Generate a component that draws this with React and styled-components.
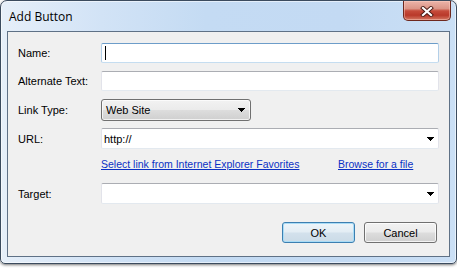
import React from 'react';
import styled, { createGlobalStyle } from 'styled-components';

const Global = createGlobalStyle`
  html, body { margin: 0; padding: 0; background: #ffffff; }
  body { width: 457px; height: 268px; overflow: hidden; font-family: "Liberation Sans", Arial, sans-serif; }
  * { box-sizing: border-box; }
`;

const Window = styled.div`
  width: 457px;
  height: 264px;
  border: 1px solid #3b4b5e;
  border-radius: 7px 7px 5px 5px;
  background: linear-gradient(90deg, #e6eff9 0%, #d2e3f6 22%, #c4dbf3 45%, #c3daf3 75%, #cadff5 100%);
  box-shadow: inset 0 0 0 1px rgba(255, 255, 255, 0.55), 0 1px 3px rgba(0, 0, 0, 0.55);
  display: flex;
  flex-direction: column;
  padding: 0 6px 6px;
`;

const TitleBar = styled.div`
  height: 30px;
  display: flex;
  align-items: flex-start;
  justify-content: space-between;
`;

const Title = styled.div`
  font-family: "Open Sans", "Noto Sans", sans-serif;
  font-size: 12px;
  line-height: 30px;
  color: #000;
  padding-left: 2px;
  padding-top: 1px;
`;

const CloseButton = styled.div`
  width: 48px;
  height: 20px;
  margin-right: -1px;
  border: 1px solid #6e281e;
  border-top: none;
  border-radius: 0 0 5px 5px;
  background: linear-gradient(180deg, #ecb4a9 0%, #dc9587 40%, #c64b3b 52%, #b9392a 75%, #d47964 100%);
  box-shadow: inset 0 0 0 1px rgba(255, 210, 200, 0.45);
  display: flex;
  align-items: center;
  justify-content: center;
  padding-top: 2px;
`;

const Client = styled.div`
  flex: 1;
  border: 1px solid #5f7186;
  background: #f0f0f0;
  padding: 11px 10px 0 10px;
  display: flex;
  flex-direction: column;
`;

const Row = styled.div`
  display: grid;
  grid-template-columns: 83px 1fr;
  align-items: center;
  height: ${p => p.$h}px;
  margin-top: ${p => p.$mt || 0}px;
`;

const Label = styled.div`
  font-size: 11px;
  color: #000;
`;

const TextBox = styled.div`
  height: 100%;
  background: #fff;
  border: 1px solid;
  border-color: ${p => (p.$focused ? '#6d9dc9 #b3cfe8 #c5ddf0 #b3cfe8' : '#abadb3 #e2e3ea #e3e9ef #e2e3ea')};
  border-radius: 2px;
  display: flex;
  align-items: center;
  padding-left: 3px;
  font-size: 11px;
`;

const Caret = styled.span`
  display: block;
  width: 1px;
  height: 14px;
  background: #000;
`;

const Combo = styled(TextBox)`
  justify-content: space-between;
  padding-right: 4px;
  padding-left: 2px;
`;

const SelectBtn = styled.div`
  width: 150px;
  height: 100%;
  border: 1px solid #707070;
  border-radius: 3px;
  background: linear-gradient(180deg, #f2f2f2 0%, #ebebeb 48%, #dddddd 52%, #cfcfcf 100%);
  box-shadow: inset 0 0 0 1px rgba(255, 255, 255, 0.7);
  display: flex;
  align-items: center;
  justify-content: space-between;
  padding: 0 5px 0 4px;
  font-size: 11px;
  color: #000;
`;

const Links = styled.div`
  display: grid;
  grid-template-columns: 237px auto;
  justify-content: start;
  font-size: 10.5px;
  line-height: 14px;
`;

const Link = styled.a`
  color: #0b31c4;
  text-decoration: underline;
  cursor: pointer;
  white-space: nowrap;
`;

const ButtonRow = styled.div`
  display: flex;
  justify-content: flex-end;
  gap: 9px;
  margin-top: 18px;
  padding-right: 2px;
`;

const Button = styled.div`
  width: 73px;
  height: 21px;
  border: 1px solid ${p => (p.$default ? '#3c7fb1' : '#707070')};
  border-radius: 3px;
  background: ${p =>
    p.$default
      ? 'linear-gradient(180deg, #eef5fa 0%, #e3edf4 48%, #d3e1ec 52%, #cbdbe7 100%)'
      : 'linear-gradient(180deg, #f2f2f2 0%, #ebebeb 48%, #dddddd 52%, #cfcfcf 100%)'};
  box-shadow: inset 0 0 0 1px ${p => (p.$default ? '#a9dcf6' : 'rgba(255,255,255,0.75)')};
  display: flex;
  align-items: center;
  justify-content: center;
  font-size: 11px;
  color: #000;
`;

const Arrow = () => (
  <svg width="7" height="4" viewBox="0 0 7 4" shapeRendering="crispEdges">
    <polygon points="0,0 7,0 3.5,4" fill="#000" />
  </svg>
);

const CloseGlyph = () => (
  <svg width="14" height="11" viewBox="0 0 14 11">
    <path d="M3 2 L11 9 M11 2 L3 9" stroke="#4a1a14" strokeWidth="4" strokeLinecap="square" fill="none" />
    <path d="M3 2 L11 9 M11 2 L3 9" stroke="#ffffff" strokeWidth="2.2" strokeLinecap="square" fill="none" />
  </svg>
);

export default function App() {
  return (
    <>
      <Global />
      <Window>
        <TitleBar>
          <Title>Add Button</Title>
          <CloseButton>
            <CloseGlyph />
          </CloseButton>
        </TitleBar>
        <Client>
          <Row $h={20}>
            <Label>Name:</Label>
            <TextBox $focused>
              <Caret />
            </TextBox>
          </Row>
          <Row $h={20} $mt={8}>
            <Label>Alternate Text:</Label>
            <TextBox />
          </Row>
          <Row $h={22} $mt={8}>
            <Label>Link Type:</Label>
            <SelectBtn>
              <span>Web Site</span>
              <Arrow />
            </SelectBtn>
          </Row>
          <Row $h={21} $mt={7}>
            <Label>URL:</Label>
            <Combo>
              <span>http://</span>
              <Arrow />
            </Combo>
          </Row>
          <Row $h={14} $mt={8}>
            <span />
            <Links>
              <Link>Select link from Internet Explorer Favorites</Link>
              <Link>Browse for a file</Link>
            </Links>
          </Row>
          <Row $h={21} $mt={12}>
            <Label>Target:</Label>
            <Combo>
              <span />
              <Arrow />
            </Combo>
          </Row>
          <ButtonRow>
            <Button $default>OK</Button>
            <Button>Cancel</Button>
          </ButtonRow>
        </Client>
      </Window>
    </>
  );
}
